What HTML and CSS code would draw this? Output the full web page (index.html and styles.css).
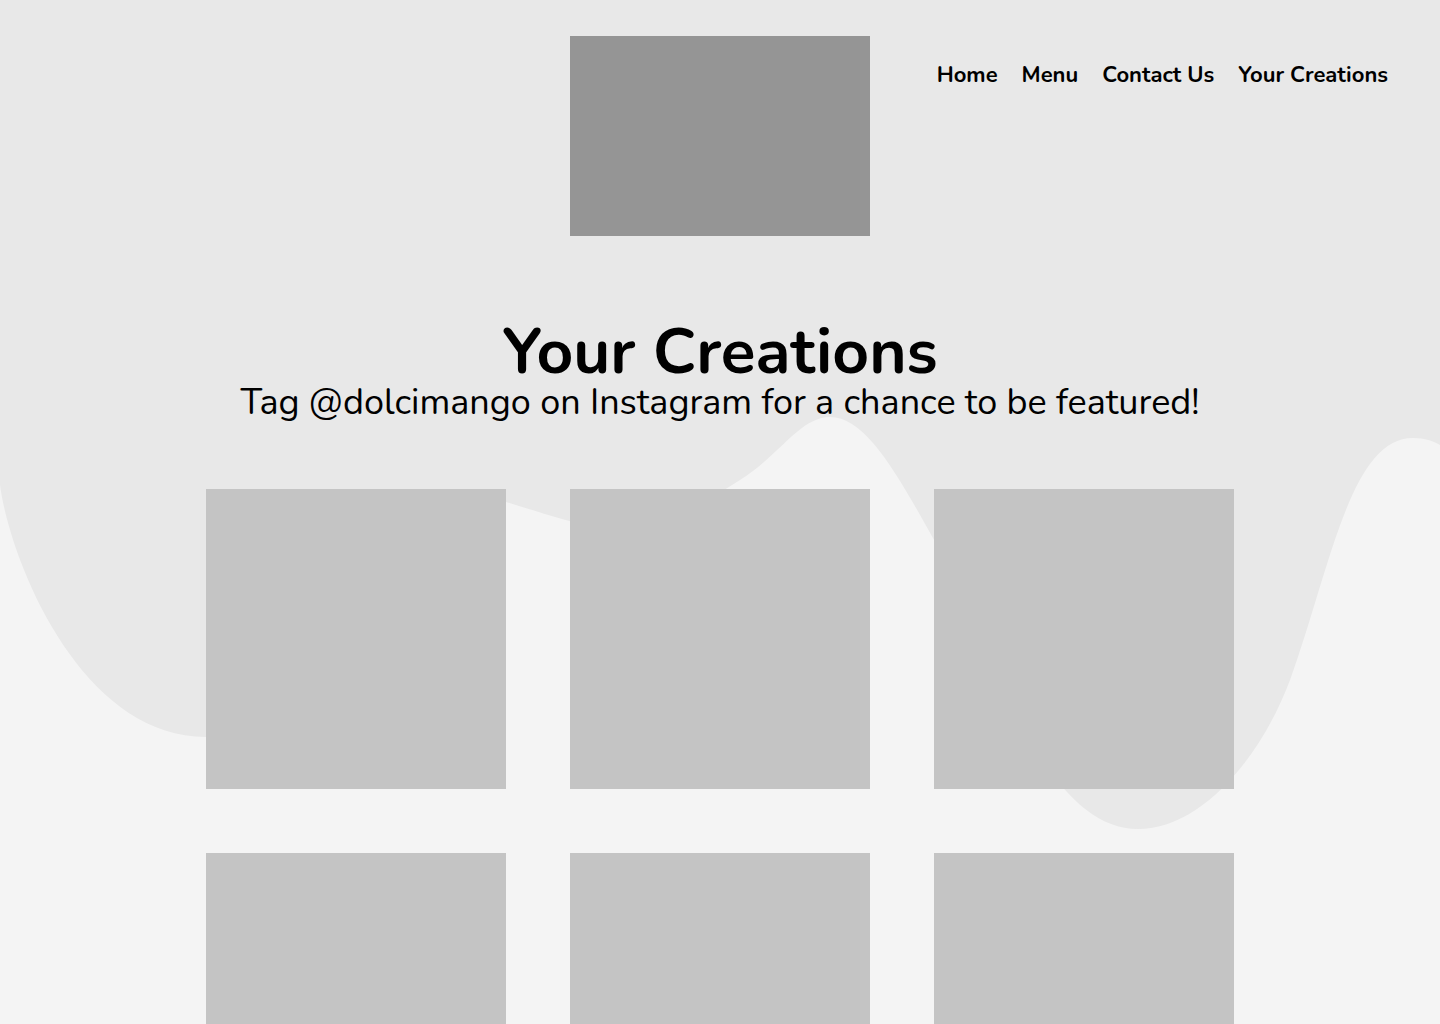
FILE: index.html
```html
<!DOCTYPE html>
<html lang="en">
<head>
<meta charset="utf-8">
<title>Your Creations</title>
<link rel="stylesheet" href="styles.css">
</head>
<body>
<div class="page">
  <svg class="backdrop" viewBox="0 0 1440 1024" width="1440" height="1024" aria-hidden="true">
    <path fill="#e8e8e8" d="M0,0 V485 C10,560 80,737 206,737 C330,737 370,492 450,490 C480,489 545,518 600,528 C655,538 700,505 740,480 C780,455 800,417 830,417 C865,417 895,470 933,538 C990,640 1040,829 1138,829 C1200,829 1260,760 1290,680 C1330,570 1350,438 1413,438 C1425,438 1433,441 1440,445 V0 Z"/>
  </svg>
  <header class="header">
    <div class="logo"></div>
    <nav class="nav">
      <a href="#">Home</a>
      <a href="#">Menu</a>
      <a href="#">Contact Us</a>
      <a href="#">Your Creations</a>
    </nav>
  </header>
  <main class="main">
    <h1 class="title">Your Creations</h1>
    <p class="subtitle">Tag @dolcimango on Instagram for a chance to be featured!</p>
    <section class="gallery">
      <div class="tile"></div>
      <div class="tile"></div>
      <div class="tile"></div>
      <div class="tile"></div>
      <div class="tile"></div>
      <div class="tile"></div>
    </section>
  </main>
</div>
</body>
</html>
```

FILE: styles.css
```css
html, body {
  margin: 0;
  padding: 0;
}
body {
  background: #f4f4f4;
  font-family: "Nunito", "Lato", "Noto Sans", sans-serif;
  color: #000;
}
.page {
  position: relative;
  min-height: 1024px;
  overflow: hidden;
}
.backdrop {
  position: absolute;
  top: 0;
  left: 0;
  z-index: 0;
  display: block;
}
.header {
  position: relative;
  z-index: 1;
  display: grid;
  grid-template-columns: 1fr 300px 1fr;
  padding-top: 36px;
}
.logo {
  grid-column: 2;
  width: 300px;
  height: 200px;
  background: #959595;
}
.nav {
  grid-column: 3;
  justify-self: end;
  align-self: start;
  display: flex;
  gap: 24px;
  padding-right: 52px;
  margin-top: 26px;
}
.nav a {
  color: #000;
  text-decoration: none;
  font-weight: 700;
  font-size: 22px;
  line-height: 1.2;
}
.main {
  position: relative;
  z-index: 1;
  display: flex;
  flex-direction: column;
  align-items: center;
  padding-top: 85px;
}
.title {
  margin: 0;
  font-size: 64px;
  font-weight: 700;
  line-height: 62px;
}
.subtitle {
  margin: 0;
  font-size: 36px;
  font-weight: 400;
  line-height: 1.1;
}
.gallery {
  margin-top: 66px;
  display: grid;
  grid-template-columns: repeat(3, 300px);
  gap: 64px;
}
.tile {
  width: 300px;
  height: 300px;
  background: #c4c4c4;
}
```
